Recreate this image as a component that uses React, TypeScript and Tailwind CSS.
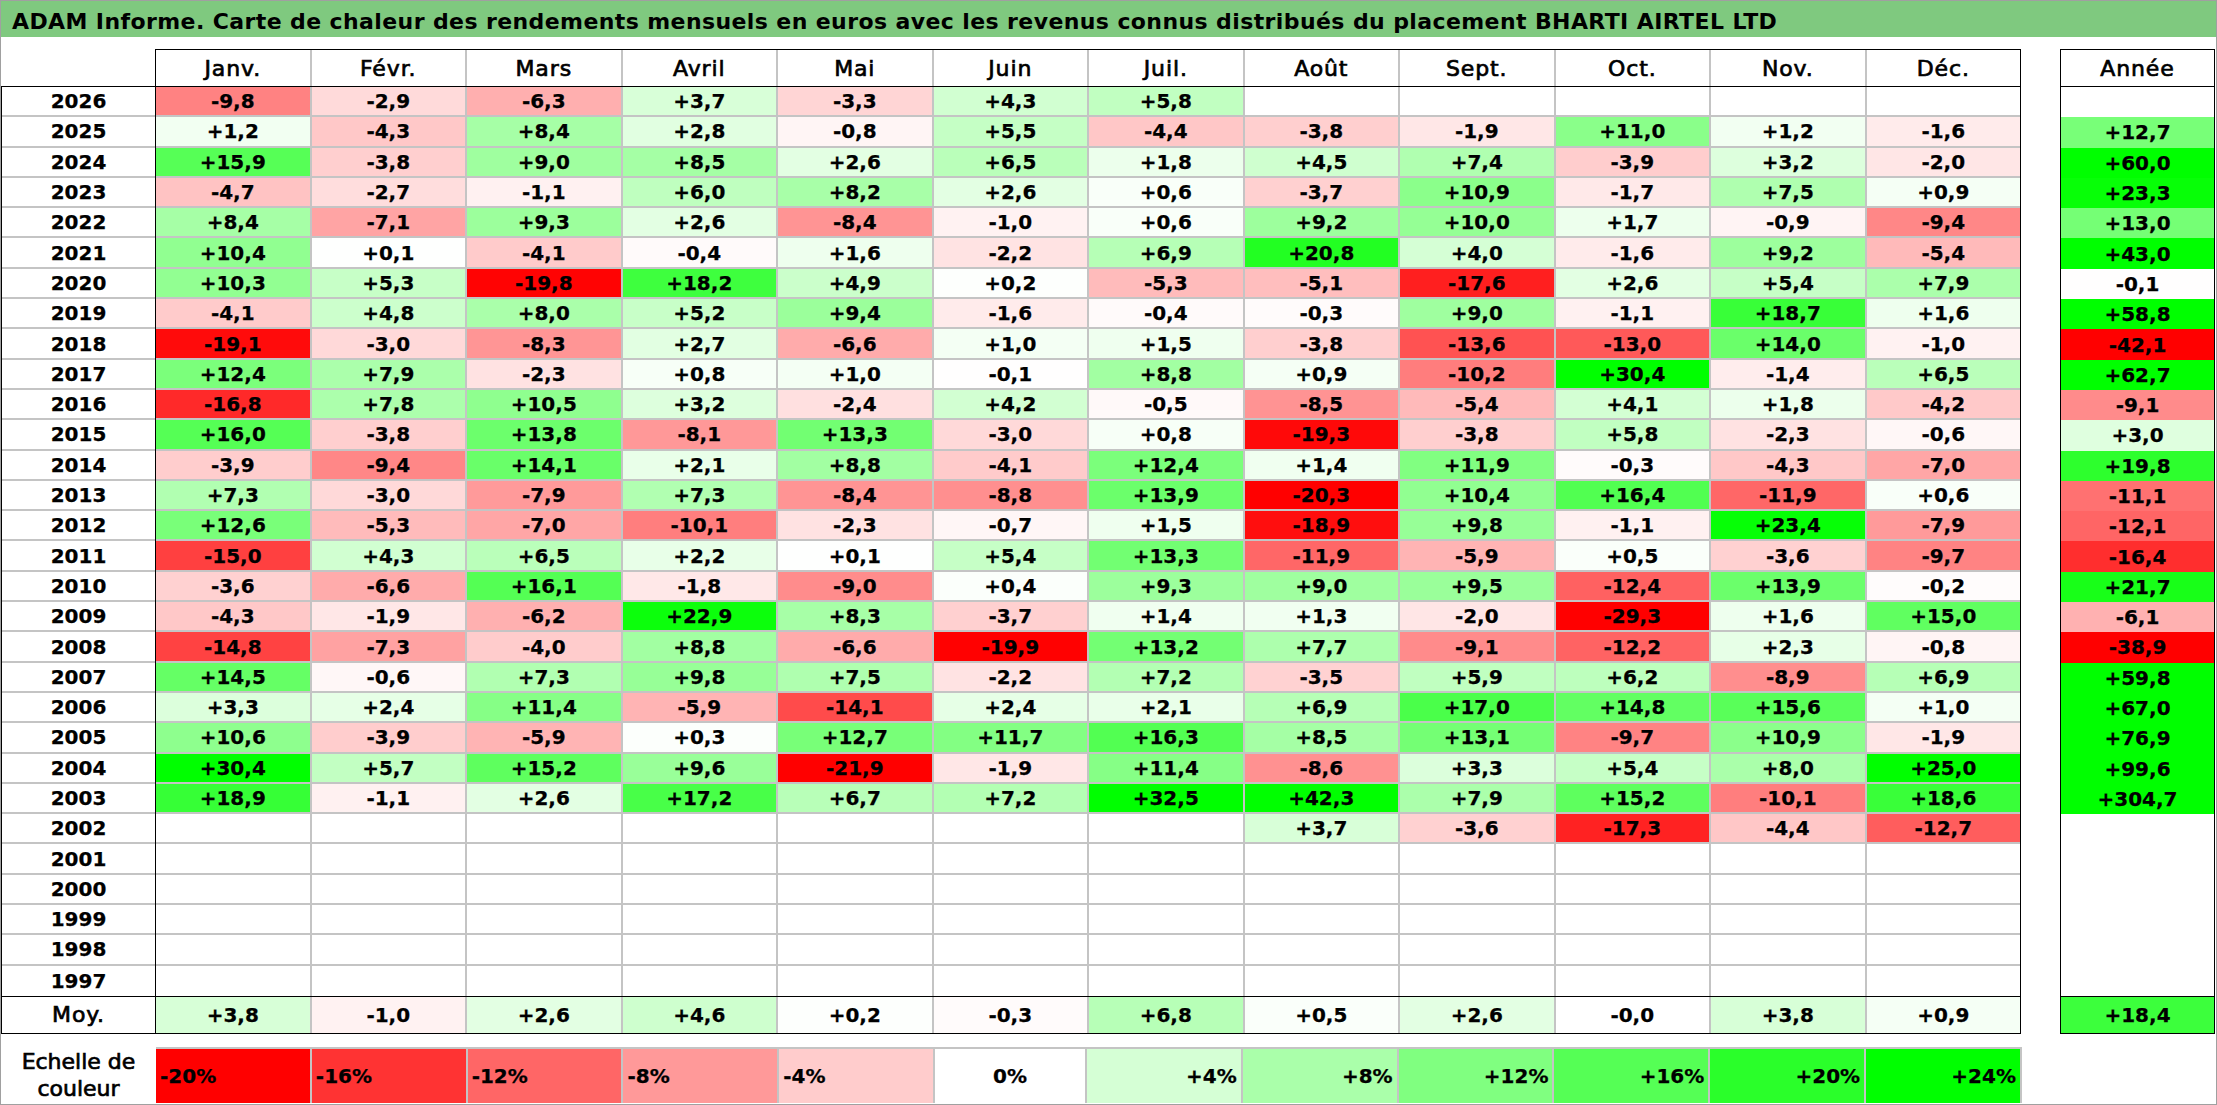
import React from 'react';

const MONTHS = ['Janv.', 'Févr.', 'Mars', 'Avril', 'Mai', 'Juin', 'Juil.', 'Août', 'Sept.', 'Oct.', 'Nov.', 'Déc.'];

// 12 mois + année, '.' = vide
const DATA: string[] = [
  '2026|-9,8 -2,9 -6,3 +3,7 -3,3 +4,3 +5,8 . . . . . .',
  '2025|+1,2 -4,3 +8,4 +2,8 -0,8 +5,5 -4,4 -3,8 -1,9 +11,0 +1,2 -1,6 +12,7',
  '2024|+15,9 -3,8 +9,0 +8,5 +2,6 +6,5 +1,8 +4,5 +7,4 -3,9 +3,2 -2,0 +60,0',
  '2023|-4,7 -2,7 -1,1 +6,0 +8,2 +2,6 +0,6 -3,7 +10,9 -1,7 +7,5 +0,9 +23,3',
  '2022|+8,4 -7,1 +9,3 +2,6 -8,4 -1,0 +0,6 +9,2 +10,0 +1,7 -0,9 -9,4 +13,0',
  '2021|+10,4 +0,1 -4,1 -0,4 +1,6 -2,2 +6,9 +20,8 +4,0 -1,6 +9,2 -5,4 +43,0',
  '2020|+10,3 +5,3 -19,8 +18,2 +4,9 +0,2 -5,3 -5,1 -17,6 +2,6 +5,4 +7,9 -0,1',
  '2019|-4,1 +4,8 +8,0 +5,2 +9,4 -1,6 -0,4 -0,3 +9,0 -1,1 +18,7 +1,6 +58,8',
  '2018|-19,1 -3,0 -8,3 +2,7 -6,6 +1,0 +1,5 -3,8 -13,6 -13,0 +14,0 -1,0 -42,1',
  '2017|+12,4 +7,9 -2,3 +0,8 +1,0 -0,1 +8,8 +0,9 -10,2 +30,4 -1,4 +6,5 +62,7',
  '2016|-16,8 +7,8 +10,5 +3,2 -2,4 +4,2 -0,5 -8,5 -5,4 +4,1 +1,8 -4,2 -9,1',
  '2015|+16,0 -3,8 +13,8 -8,1 +13,3 -3,0 +0,8 -19,3 -3,8 +5,8 -2,3 -0,6 +3,0',
  '2014|-3,9 -9,4 +14,1 +2,1 +8,8 -4,1 +12,4 +1,4 +11,9 -0,3 -4,3 -7,0 +19,8',
  '2013|+7,3 -3,0 -7,9 +7,3 -8,4 -8,8 +13,9 -20,3 +10,4 +16,4 -11,9 +0,6 -11,1',
  '2012|+12,6 -5,3 -7,0 -10,1 -2,3 -0,7 +1,5 -18,9 +9,8 -1,1 +23,4 -7,9 -12,1',
  '2011|-15,0 +4,3 +6,5 +2,2 +0,1 +5,4 +13,3 -11,9 -5,9 +0,5 -3,6 -9,7 -16,4',
  '2010|-3,6 -6,6 +16,1 -1,8 -9,0 +0,4 +9,3 +9,0 +9,5 -12,4 +13,9 -0,2 +21,7',
  '2009|-4,3 -1,9 -6,2 +22,9 +8,3 -3,7 +1,4 +1,3 -2,0 -29,3 +1,6 +15,0 -6,1',
  '2008|-14,8 -7,3 -4,0 +8,8 -6,6 -19,9 +13,2 +7,7 -9,1 -12,2 +2,3 -0,8 -38,9',
  '2007|+14,5 -0,6 +7,3 +9,8 +7,5 -2,2 +7,2 -3,5 +5,9 +6,2 -8,9 +6,9 +59,8',
  '2006|+3,3 +2,4 +11,4 -5,9 -14,1 +2,4 +2,1 +6,9 +17,0 +14,8 +15,6 +1,0 +67,0',
  '2005|+10,6 -3,9 -5,9 +0,3 +12,7 +11,7 +16,3 +8,5 +13,1 -9,7 +10,9 -1,9 +76,9',
  '2004|+30,4 +5,7 +15,2 +9,6 -21,9 -1,9 +11,4 -8,6 +3,3 +5,4 +8,0 +25,0 +99,6',
  '2003|+18,9 -1,1 +2,6 +17,2 +6,7 +7,2 +32,5 +42,3 +7,9 +15,2 -10,1 +18,6 +304,7',
  '2002|. . . . . . . +3,7 -3,6 -17,3 -4,4 -12,7 .',
  '2001|. . . . . . . . . . . . .',
  '2000|. . . . . . . . . . . . .',
  '1999|. . . . . . . . . . . . .',
  '1998|. . . . . . . . . . . . .',
  '1997|. . . . . . . . . . . . .',
];

const MOY = '+3,8 -1,0 +2,6 +4,6 +0,2 -0,3 +6,8 +0,5 +2,6 -0,0 +3,8 +0,9 +18,4'.split(' ');

const SCALE = [-20, -16, -12, -8, -4, 0, 4, 8, 12, 16, 20, 24];

const rows = DATA.map((line) => {
  const [year, rest] = line.split('|');
  return { year, values: rest.split(' ').map((v) => (v === '.' ? '' : v)) };
});

function heat(v: string | number): string {
  if (v === '') return '#ffffff';
  const n = typeof v === 'number' ? v : parseFloat(v.replace(',', '.'));
  if (n >= 0) {
    const c = Math.round(255 * (1 - Math.min(n / 24, 1)));
    return `rgb(${c},255,${c})`;
  }
  const c = Math.round(255 * (1 - Math.min(-n / 20, 1)));
  return `rgb(255,${c},${c})`;
}

function MonthCell({ value, last }: { value: string; last: boolean }) {
  return (
    <div
      className={`flex-1 flex items-center justify-center ${last ? '' : 'border-r-2 border-[#c4c4c4]'}`}
      style={{ backgroundColor: heat(value) }}
    >
      {value}
    </div>
  );
}

export default function App() {
  return (
    <div className="w-[2217px] h-[1105px] bg-white border border-[#a0a0a0] font-['DejaVu_Sans',sans-serif] text-black overflow-hidden">
      <div className="h-[36px] bg-[#7fc97f] flex items-center pl-[11px] pt-[5px] text-[22px] tracking-[0.4px] font-bold whitespace-nowrap">
        ADAM Informe. Carte de chaleur des rendements mensuels en euros avec les revenus connus distribués du placement BHARTI AIRTEL LTD
      </div>

      <div className="flex mt-[12px]">
        {/* colonne des années */}
        <div className="w-[154px] shrink-0">
          <div className="h-[37px]" />
          <div className="border-l border-t border-black text-[20px] font-bold [-webkit-text-stroke:0.25px_black]">
            {rows.map((r, i) => (
              <div
                key={r.year}
                className={`h-[30.3px] flex items-center justify-center ${i < rows.length - 1 ? 'border-b-2 border-[#c4c4c4]' : ''}`}
              >
                {r.year}
              </div>
            ))}
          </div>
          <div className="h-[38px] border-l border-t border-b border-black flex items-center justify-center text-[22px] tracking-[0.04em] [-webkit-text-stroke:0.7px_black]">
            Moy.
          </div>
        </div>

        {/* mois */}
        <div className="w-[1866px] shrink-0 border border-black">
          <div className="h-[37px] flex border-b border-black text-[22px] tracking-[0.04em] [-webkit-text-stroke:0.7px_black]">
            {MONTHS.map((m, i) => (
              <div
                key={m}
                className={`flex-1 flex items-center justify-center ${i < 11 ? 'border-r-2 border-[#c4c4c4]' : ''}`}
              >
                {m}
              </div>
            ))}
          </div>
          <div className="text-[20px] font-bold [-webkit-text-stroke:0.25px_black]">
            {rows.map((r, i) => (
              <div
                key={r.year}
                className={`h-[30.3px] flex ${i < rows.length - 1 ? 'border-b-2 border-[#c4c4c4]' : ''}`}
              >
                {r.values.slice(0, 12).map((v, j) => (
                  <MonthCell key={j} value={v} last={j === 11} />
                ))}
              </div>
            ))}
          </div>
          <div className="h-[37px] flex border-t border-black text-[20px] font-bold [-webkit-text-stroke:0.25px_black]">
            {MOY.slice(0, 12).map((v, j) => (
              <MonthCell key={j} value={v} last={j === 11} />
            ))}
          </div>
        </div>

        {/* année */}
        <div className="w-[155px] shrink-0 ml-[39px] border border-black">
          <div className="h-[37px] flex items-center justify-center border-b border-black text-[22px] tracking-[0.04em] [-webkit-text-stroke:0.7px_black]">
            Année
          </div>
          <div className="text-[20px] font-bold [-webkit-text-stroke:0.25px_black]">
            {rows.map((r) => (
              <div
                key={r.year}
                className="h-[30.3px] flex items-center justify-center"
                style={{ backgroundColor: heat(r.values[12]) }}
              >
                {r.values[12]}
              </div>
            ))}
          </div>
          <div
            className="h-[37px] flex items-center justify-center border-t border-black text-[20px] font-bold [-webkit-text-stroke:0.25px_black]"
            style={{ backgroundColor: heat(MOY[12]) }}
          >
            {MOY[12]}
          </div>
        </div>
      </div>

      {/* échelle de couleur */}
      <div className="flex mt-[13px]">
        <div className="w-[155px] h-[56px] shrink-0 flex flex-col items-center justify-center text-[22px] leading-[27px] [-webkit-text-stroke:0.7px_black]">
          <span>Echelle de</span>
          <span>couleur</span>
        </div>
        <div className="w-[1866px] h-[56px] flex border-t-2 border-[#c4c4c4] text-[20px] font-bold [-webkit-text-stroke:0.25px_black]">
          {SCALE.map((s) => (
            <div
              key={s}
              className={`flex-1 flex items-center border-r-2 border-[#c4c4c4] ${
                s < 0 ? 'justify-start pl-[4px]' : s === 0 ? 'justify-center' : 'justify-end pr-[4px]'
              }`}
              style={{ backgroundColor: heat(s) }}
            >
              {s > 0 ? `+${s}%` : `${s}%`}
            </div>
          ))}
        </div>
      </div>
    </div>
  );
}
